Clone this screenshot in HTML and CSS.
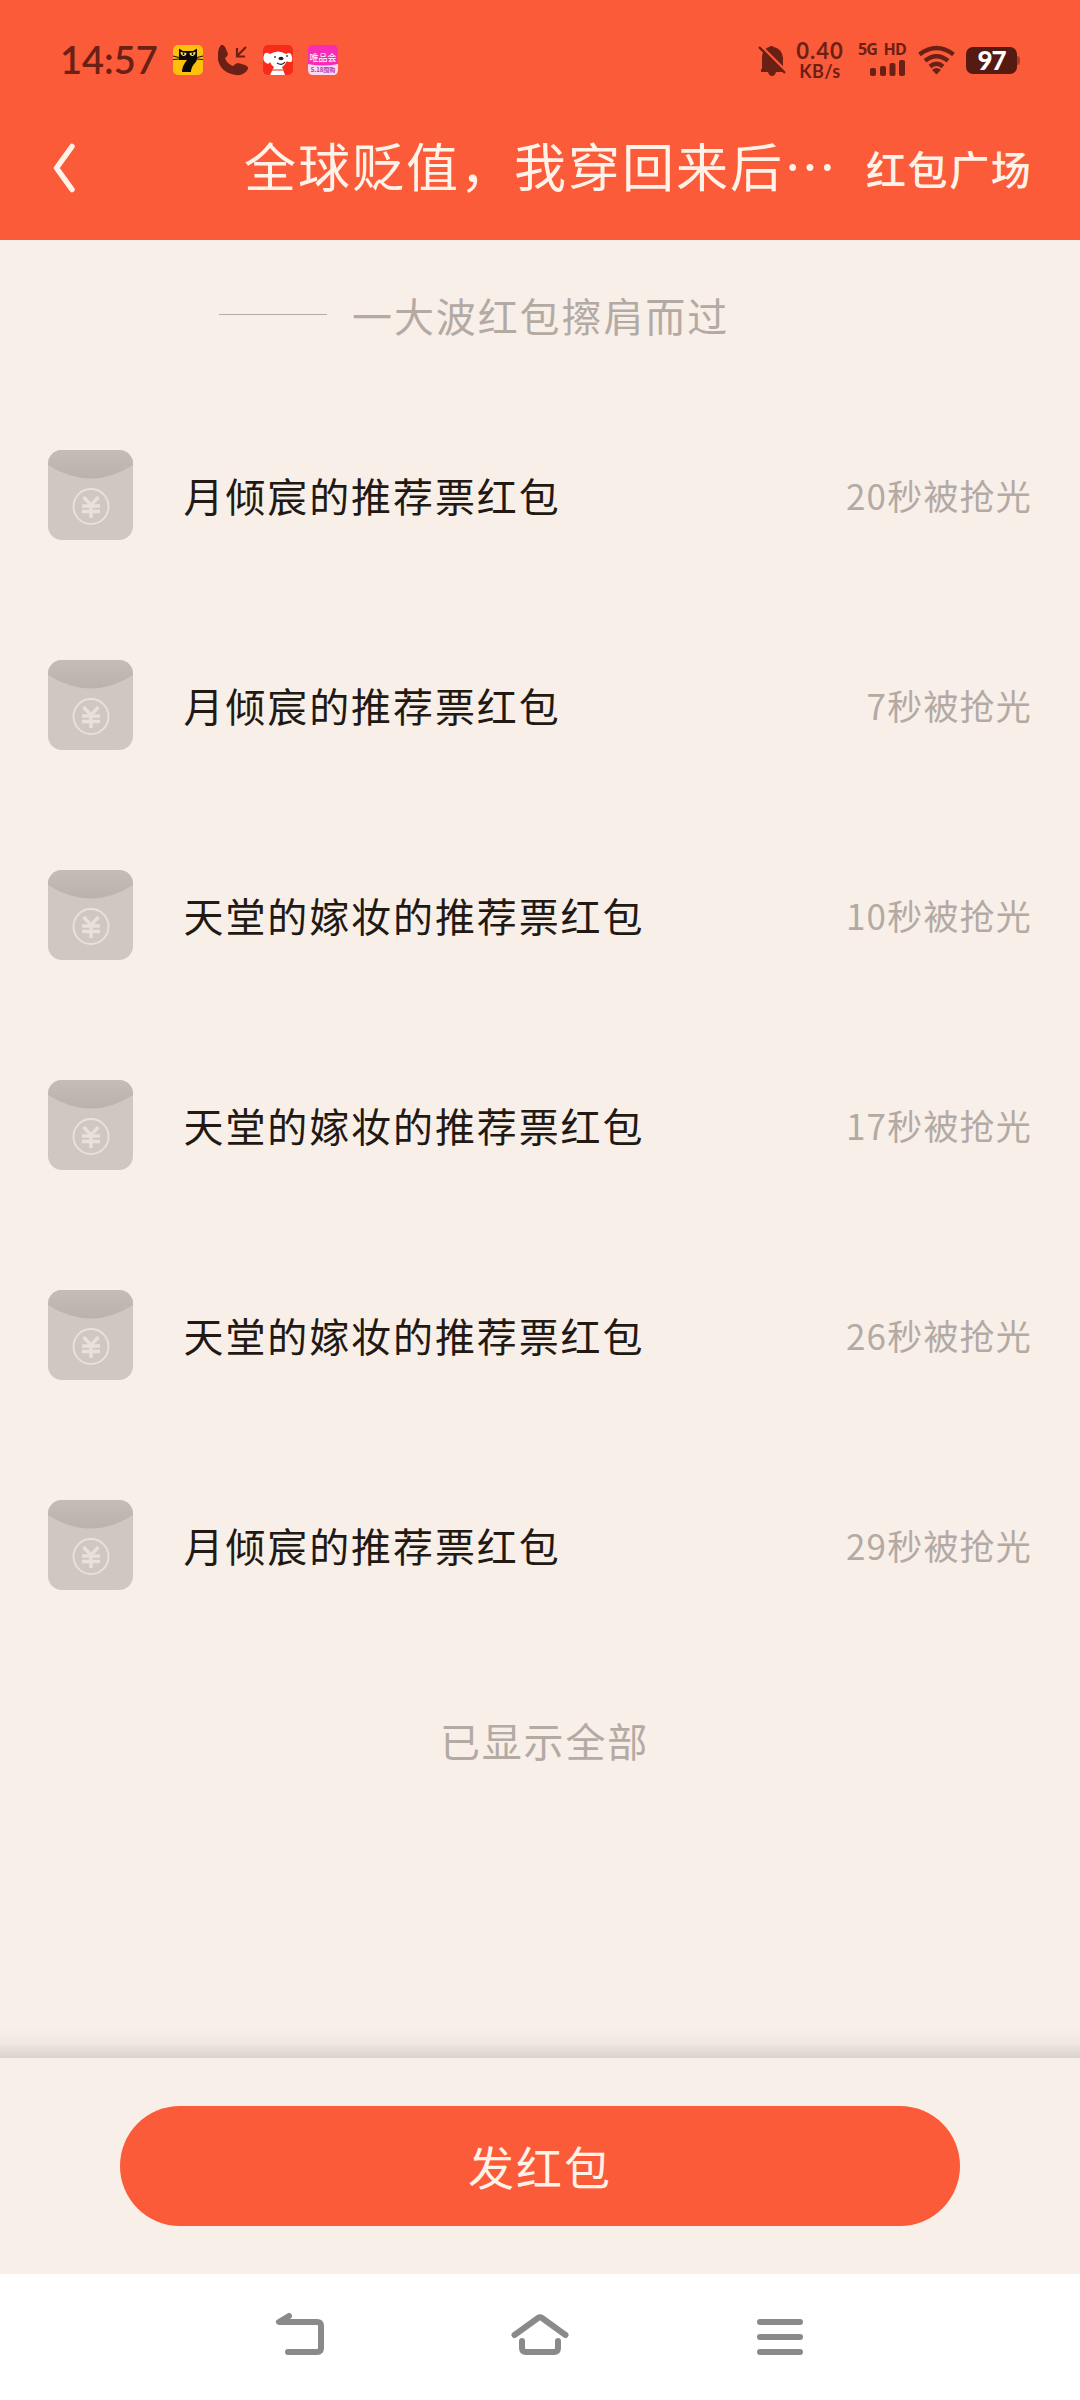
FILE: index.html
```html
<!DOCTYPE html>
<html lang="zh-CN">
<head>
    <meta charset="UTF-8">
    <meta name="viewport" content="width=device-width, initial-scale=1.0">
    <title>红包</title>
    <link rel="stylesheet" href="styles.css">
</head>
<body>
    <svg class="defs" width="0" height="0">
        <linearGradient id="flap" x1="0" y1="0" x2="0" y2="1">
            <stop offset="0" stop-color="#c3bcb7"/>
            <stop offset="1" stop-color="#bab2ad"/>
        </linearGradient>
        <symbol id="packet" viewBox="0 0 85 90">
            <rect width="85" height="90" rx="14" fill="#cfc7c2"/>
            <path d="M0 15V14A14 14 0 0 1 14 0H71A14 14 0 0 1 85 14V15Q43 42 0 15Z" fill="url(#flap)"/>
            <circle cx="43" cy="56.5" r="17.5" fill="none" stroke="#e8e0da" stroke-width="2"/>
            <path d="M35.500 47l7.500 8 7.500-8M43 55v13M34 56h18M34 61.500h18" fill="none" stroke="#e8e0da" stroke-width="3.4"/>
        </symbol>
    </svg>
    <header class="top">
        <div class="status-bar">
            <span class="clock">14:57</span>
            <div class="app-icons">
                <svg width="30" height="30" viewBox="0 0 30 30">
                    <rect width="30" height="30" rx="5" fill="#fdc10d"/>
                    <path d="M6 3.500l4 2.500h10l4-2.500V14q0 2-2 4-4 4-4 9H9q0-6 5-12H6z" fill="#0c0a04"/>
                    <path d="M0 11l6 1.500M0 14.500l6-.5M30 11l-6 1.500M30 14.500l-6-.5" stroke="#0c0a04"/>
                    <path d="M7.500 7l6 1q0 3-3 3-3-1-3-4zM22.500 7l-6 1q0 3 3 3 3-1 3-4z" fill="#ffe45c"/>
                    <path d="M10.500 7.500v2.500M19.500 7.500v2.500" stroke="#0c0a04" stroke-width="1.5"/>
                </svg>
                <svg width="31" height="31" viewBox="0 0 31 31">
                    <path d="M3 0q3-1 5 4l2 5q0 2-3 4 2 6 8 8 3-3 5-3l7 2q4 2 3 4-4 7-12 6Q3 28 0 15-1 4 3 0z" fill="#6b2015"/>
                    <path d="M28 2L19.500 10.500M19 3v8.500h8" fill="none" stroke="#6b2015" stroke-width="2.2"/>
                </svg>
                <svg width="30" height="30" viewBox="0 0 30 30">
                    <rect width="30" height="30" rx="5" fill="#f72a1c"/>
                    <path d="M7 9Q15 4 23 9q5-3 6 3 1 5-2 5-3 0-3-1-2 4-5 6l3 8H7l4-8q-3-2-4-5-1 3-4 1-4-2-2-8 1-4 6-1z" fill="#fff"/>
                    <ellipse cx="18" cy="13.5" rx="2.5" ry="1.7" fill="#222"/>
                    <path d="M12 11v2M24 10v2M14 18q5 3 8-1" fill="none" stroke="#222" stroke-width="1.2"/>
                    <path d="M9 25h12" stroke="#e8655d" stroke-width="1.4"/>
                </svg>
                <svg width="30" height="30" viewBox="0 0 30 30">
                    <rect width="30" height="30" rx="5" fill="#f82bb6"/>
                    <path d="M0 19q15 3 30 0v6q0 5-5 5H5q-5 0-5-5z" fill="#fbd9ee"/>
                    <text class="vip" x="15" y="15.5" text-anchor="middle" fill="#fff" font-size="9">唯品会</text>
                    <text class="vip" x="15" y="27" text-anchor="middle" fill="#b13ba8" font-size="6" font-weight="700">5.18囤购</text>
                </svg>
            </div>
            <div class="status-right">
                <svg width="29" height="31" viewBox="0 0 29 31">
                    <path d="M4 24V13Q4 4 11 2q2-2 5 0 8 2 9 11v11h1v3H3v-3zM10 27h8q-1 4-4 4t-4-4z" fill="#6b2015"/>
                    <path d="M2 0L29 27" stroke="#fb5b39" stroke-width="2.5"/>
                    <path d="M1 2L27 28" stroke="#6b2015" stroke-width="2.4"/>
                </svg>
                <div class="speed">
                    <span class="speed-num">0.40</span>
                    <span class="speed-unit">KB/s</span>
                </div>
                <div class="network">
                    <div class="network-type"><span>5G</span><span>HD</span></div>
                    <svg width="36" height="17" viewBox="0 0 36 17" fill="#6b2015">
                        <rect y="8" width="6" height="8" rx="2"/>
                        <rect x="10" y="6" width="6" height="10" rx="2"/>
                        <rect x="19.5" y="3" width="6" height="13" rx="2"/>
                        <rect x="29" width="6" height="16" rx="2"/>
                    </svg>
                </div>
                <svg width="37" height="30" viewBox="0 0 37 30">
                    <g fill="none" stroke="#6b2015" stroke-width="4.4">
                        <path d="M1.500 9.500Q18.500-3.500 35.500 9.500"/>
                        <path d="M7 15.800Q18.500 6.500 30 15.800"/>
                        <path d="M12 21.500Q18.500 16 25 21.500"/>
                    </g>
                    <path d="M14 25q4.500-4 9 0l-4.500 4.500z" fill="#6b2015"/>
                </svg>
                <div class="battery"><span>97</span></div>
            </div>
        </div>
        <div class="title-bar">
            <svg class="back" width="24" height="50" viewBox="0 0 24 50">
                <path d="M20 3.500L4.500 25 20 46.500" fill="none" stroke="#fff2e8" stroke-width="5.5" stroke-linecap="round" stroke-linejoin="round"/>
            </svg>
            <h1>全球贬值，我穿回来后…</h1>
            <a class="plaza">红包广场</a>
        </div>
    </header>
    <main>
        <div class="section-title">
            <i class="line"></i>
            <span>一大波红包擦肩而过</span>
        </div>
        <ul class="list">
            <li><svg class="packet"><use href="#packet"/></svg><span class="name">月倾宸的推荐票红包</span><span class="time">20秒被抢光</span></li>
            <li><svg class="packet"><use href="#packet"/></svg><span class="name">月倾宸的推荐票红包</span><span class="time">7秒被抢光</span></li>
            <li><svg class="packet"><use href="#packet"/></svg><span class="name">天堂的嫁妆的推荐票红包</span><span class="time">10秒被抢光</span></li>
            <li><svg class="packet"><use href="#packet"/></svg><span class="name">天堂的嫁妆的推荐票红包</span><span class="time">17秒被抢光</span></li>
            <li><svg class="packet"><use href="#packet"/></svg><span class="name">天堂的嫁妆的推荐票红包</span><span class="time">26秒被抢光</span></li>
            <li><svg class="packet"><use href="#packet"/></svg><span class="name">月倾宸的推荐票红包</span><span class="time">29秒被抢光</span></li>
        </ul>
        <p class="all-shown">已显示全部</p>
    </main>
    <div class="shade"></div>
    <footer class="send-bar">
        <button class="send">发红包</button>
    </footer>
    <nav class="nav-bar">
        <svg width="60" height="60" viewBox="0 0 60 60">
            <path d="M19 12L9 18H47Q51 18 51 22V44Q51 48 47 48H18"/>
        </svg>
        <svg width="60" height="60" viewBox="0 0 60 60">
            <path d="M4.500 31L28 14Q30 12.500 32 14L55.500 31M12 37V44Q12 48 16 48H44Q48 48 48 44V37"/>
        </svg>
        <svg width="60" height="60" viewBox="0 0 60 60">
            <path d="M10 18H50M10 33H50M10 48H50"/>
        </svg>
    </nav>
</body>
</html>
```
FILE: styles.css
```css
body {
    font-family: "Noto Sans CJK SC", sans-serif;
    margin: 0;
    width: 1080px;
    height: 2400px;
    display: flex;
    flex-direction: column;
    background-color: #f8efe9;
    color: #231913;
    overflow: hidden;
}

.defs {
    position: absolute;
}

svg {
    display: block;
    flex-shrink: 0;
}

.top {
    height: 240px;
    background-color: #fb5b39;
}

.status-bar {
    display: flex;
    align-items: center;
    height: 60px;
    padding: 30px 60px 0 60px;
    color: #6b2015;
    font-family: Lato, sans-serif;
}

.clock {
    width: 113px;
    margin-bottom: 2px;
    font-size: 38px;
    font-weight: 600;
    line-height: 58px;
    white-space: nowrap;
}

.app-icons {
    display: flex;
    gap: 14.5px;
    align-items: center;
}

.vip {
    font-family: "Noto Sans CJK SC", sans-serif;
}

.status-right {
    display: flex;
    align-items: center;
    margin-left: auto;
}

.speed {
    display: flex;
    flex-direction: column;
    align-items: center;
    width: 50px;
    margin-left: 8px;
    font-weight: 700;
    white-space: nowrap;
}

.speed-num {
    font-size: 22px;
    line-height: 22px;
    letter-spacing: 1px;
}

.speed-unit {
    font-size: 18px;
    line-height: 18px;
    letter-spacing: 0.4px;
}

.network {
    display: flex;
    flex-direction: column;
    align-items: flex-end;
    width: 48px;
    margin-left: 13px;
    font-family: "Open Sans", sans-serif;
    font-size: 16px;
    font-weight: 700;
    line-height: 18px;
    white-space: nowrap;
}

.network-type {
    display: flex;
    justify-content: space-between;
    width: 48px;
    margin-top: -4px;
    margin-bottom: 2px;
    letter-spacing: -0.8px;
}

.network + svg {
    margin-left: 12px;
}

.battery {
    position: relative;
    width: 51px;
    height: 27px;
    margin-left: 11px;
    margin-right: 3px;
    border-radius: 7px;
    background-color: #551a11;
    color: #fff;
    font-size: 26px;
    font-weight: 900;
    line-height: 27px;
    letter-spacing: -1px;
    text-align: center;
}

.battery::after {
    content: "";
    position: absolute;
    left: 51px;
    top: 9px;
    width: 3px;
    height: 9px;
    border-radius: 0 3px 3px 0;
    background-color: #b03a25;
}

.title-bar {
    display: flex;
    align-items: center;
    height: 150px;
    padding: 6px 50px 0 52px;
    box-sizing: border-box;
    color: #fff2e8;
}

.title-bar h1 {
    margin: 0 0 8px 168px;
    width: 594px;
    font-size: 52px;
    font-weight: 400;
    letter-spacing: 2px;
    white-space: nowrap;
}

.plaza {
    margin-left: 28px;
    font-size: 40px;
    font-weight: 500;
    letter-spacing: 1.6px;
    white-space: nowrap;
}

main {
    height: 1788px;
}

.section-title {
    display: flex;
    align-items: center;
    height: 60px;
    padding: 45px 0 0 219px;
    font-size: 40px;
    letter-spacing: 1.9px;
    color: #b3aaa4;
}

.line {
    width: 108px;
    height: 1px;
    margin: 0 25px 2px 0;
    background-color: #b3aaa4;
}

.list {
    list-style: none;
    margin: 45px 0 0 0;
    padding: 0 48px;
}

.list li {
    display: flex;
    align-items: center;
    height: 210px;
}

.packet {
    width: 85px;
    height: 90px;
}

.name {
    margin: 0 0 1px 50.5px;
    font-size: 40px;
    letter-spacing: 1.9px;
}

.time {
    margin: 0 0 1px auto;
    font-size: 35px;
    letter-spacing: 1.2px;
    color: #b3aaa4;
}

.all-shown {
    margin: 60px 0 0 0;
    padding-left: 9px;
    font-size: 40px;
    line-height: 60px;
    letter-spacing: 1.8px;
    text-align: center;
    color: #b3aaa4;
}

.shade {
    height: 30px;
    background: linear-gradient(to bottom, rgba(0, 0, 0, 0), rgba(0, 0, 0, 0.03) 50%, rgba(0, 0, 0, 0.12));
}

.send-bar {
    display: flex;
    justify-content: center;
    align-items: center;
    height: 216px;
}

.send {
    width: 840px;
    height: 120px;
    padding: 0 0 3px 0;
    border: none;
    border-radius: 60px;
    background-color: #fb5b39;
    color: #fff2e8;
    font-family: inherit;
    font-size: 46px;
    letter-spacing: 2px;
}

.nav-bar {
    display: flex;
    justify-content: center;
    gap: 180px;
    height: 126px;
    padding-top: 30px;
    box-sizing: border-box;
    background-color: #fff;
}

.nav-bar svg {
    fill: none;
    stroke: #8a8a8a;
    stroke-width: 6;
    stroke-linecap: round;
    stroke-linejoin: round;
}
```
